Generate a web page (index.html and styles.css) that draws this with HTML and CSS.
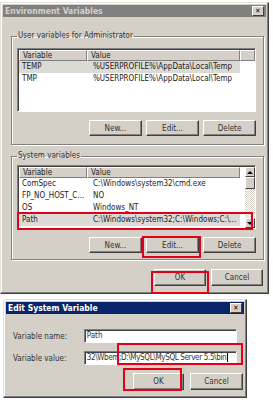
FILE: index.html
```html
<!DOCTYPE html>
<html lang="en">
<head>
  <meta charset="UTF-8" />
  <title>Environment Variables</title>
  <link rel="stylesheet" href="styles.css">
</head>
<body>

<div class="screen">

  <div class="win env">
    <div class="title inactive">
      <span class="title-text">Environment Variables</span>
      <span class="close">&#x2715;</span>
    </div>
    <div class="win-body">

      <fieldset class="group user-group">
        <legend>User variables for Administrator</legend>
        <div class="list">
          <div class="list-head">
            <div class="col col-var">Variable</div>
            <div class="col col-val">Value</div>
            <div class="col col-fill"></div>
          </div>
          <div class="row selected">
            <div class="col col-var">TEMP</div>
            <div class="col col-val">%USERPROFILE%\AppData\Local\Temp</div>
          </div>
          <div class="row">
            <div class="col col-var">TMP</div>
            <div class="col col-val">%USERPROFILE%\AppData\Local\Temp</div>
          </div>
        </div>
        <div class="btns">
          <button class="btn">New...</button>
          <button class="btn">Edit...</button>
          <button class="btn">Delete</button>
        </div>
      </fieldset>

      <fieldset class="group sys-group">
        <legend>System variables</legend>
        <div class="list with-scroll">
          <div class="list-main">
            <div class="list-head">
              <div class="col col-var">Variable</div>
              <div class="col col-val">Value</div>
            </div>
            <div class="row">
              <div class="col col-var">ComSpec</div>
              <div class="col col-val">C:\Windows\system32\cmd.exe</div>
            </div>
            <div class="row">
              <div class="col col-var">FP_NO_HOST_C...</div>
              <div class="col col-val">NO</div>
            </div>
            <div class="row">
              <div class="col col-var">OS</div>
              <div class="col col-val">Windows_NT</div>
            </div>
            <div class="row selected">
              <div class="col col-var">Path</div>
              <div class="col col-val">C:\Windows\system32;C:\Windows;C:\...</div>
            </div>
          </div>
          <div class="scrollbar">
            <div class="sb-btn"><span class="arrow up"></span></div>
            <div class="sb-thumb"></div>
            <div class="sb-track"></div>
            <div class="sb-btn"><span class="arrow down"></span></div>
          </div>
        </div>
        <div class="btns">
          <button class="btn">New...</button>
          <button class="btn">Edit...</button>
          <button class="btn">Delete</button>
        </div>
      </fieldset>

      <div class="btns dialog-btns">
        <button class="btn">OK</button>
        <button class="btn">Cancel</button>
      </div>
    </div>
  </div>

  <div class="win edit">
    <div class="title active">
      <span class="title-text">Edit System Variable</span>
      <span class="close">&#x2715;</span>
    </div>
    <div class="win-body edit-body">
      <div class="field">
        <label>Variable name:</label>
        <div class="input">Path</div>
      </div>
      <div class="field">
        <label>Variable value:</label>
        <div class="input tight">32\Wbem;D:\MySQL\MySQL Server 5.5\bin<span class="caret"></span></div>
      </div>
      <div class="btns edit-btns">
        <button class="btn">OK</button>
        <button class="btn">Cancel</button>
      </div>
    </div>
  </div>

  <!-- red highlight boxes drawn over the screenshot -->
  <div class="mark mark-path"></div>
  <div class="mark mark-edit"></div>
  <div class="mark mark-ok"></div>
  <div class="mark mark-value"></div>
  <div class="mark mark-ok2"></div>

</div>

</body>
</html>
```

FILE: styles.css
```css
body {
  margin: 0;
  background: #fff;
  font-family: "DejaVu Sans Condensed", "DejaVu Sans", sans-serif;
  font-size: 8px;
  color: #222;
}
.screen {
  position: relative;
  width: 273px;
  height: 400px;
  padding-top: 2px;
  box-sizing: border-box;
  overflow: hidden;
}

/* windows */
.win {
  background: #d4d0c8;
  border: 1px solid;
  border-color: #e4e2dc #404040 #404040 #e4e2dc;
  box-shadow: inset -1px -1px #808080, inset 1px 1px #fff;
  padding: 2px;
  box-sizing: border-box;
}
.env {
  width: 269px;
  height: 292px;
}
.edit {
  width: 244px;
  height: 99px;
  margin: 5px 0 0 3px;
}
.title {
  height: 12px;
  display: flex;
  align-items: center;
  justify-content: space-between;
  padding: 0 2px 0 2px;
  font-weight: bold;
  font-size: 8.5px;
}
.title.inactive {
  background: #808080;
  color: #d4d0c8;
}
.title.active {
  background: #0a246a;
  color: #fff;
}
.close {
  width: 10px;
  height: 8px;
  background: #d4d0c8;
  color: #000;
  font-size: 7px;
  line-height: 8px;
  text-align: center;
  border: 1px solid;
  border-color: #fff #404040 #404040 #fff;
}

/* group boxes */
.group {
  margin: 0;
  border: 1px solid #808080;
  box-shadow: 1px 1px 0 #fff, inset 1px 1px 0 #fff;
  width: 253px;
  box-sizing: border-box;
}
.group legend {
  padding: 0 1px;
  line-height: 10px;
  color: #333;
}
.user-group {
  margin: 14px 0 0 8px;
  padding: 7px 7px 8px 5px;
}
.sys-group {
  margin: 6px 0 0 8px;
  padding: 4px 7px 6px 5px;
}

/* list views */
.list {
  background: #fff;
  border: 1px solid;
  border-color: #808080 #fff #fff #808080;
  box-shadow: inset 1px 1px #404040;
  height: 64px;
  padding: 1px 0 0 1px;
  box-sizing: border-box;
}
.with-scroll {
  display: flex;
}
.list-main {
  flex: 1;
}
.list-head {
  display: flex;
  height: 11px;
  line-height: 10px;
}
.list-head .col {
  background: #d4d0c8;
  border: 1px solid;
  border-color: #fff #808080 #808080 #fff;
  box-sizing: border-box;
}
.col {
  padding-left: 3px;
  white-space: nowrap;
  overflow: hidden;
}
.col-var {
  width: 68px;
  box-sizing: border-box;
}
.col-val {
  width: 153px;
  box-sizing: border-box;
}
.col-fill {
  flex: 1;
}
.row {
  display: flex;
  height: 12px;
  line-height: 12px;
  width: 221px;
}
.row .col-val {
  padding-left: 6px;
}
.row.selected {
  background: #dcdad5;
}

/* scrollbar */
.scrollbar {
  width: 10px;
  display: flex;
  flex-direction: column;
}
.sb-btn,
.sb-thumb {
  height: 10px;
  background: #d4d0c8;
  border: 1px solid;
  border-color: #fff #404040 #404040 #fff;
  box-sizing: border-box;
  display: flex;
  align-items: center;
  justify-content: center;
}
.sb-thumb {
  height: 12px;
}
.sb-track {
  flex: 1;
  background: repeating-conic-gradient(#fff 0 25%, #d4d0c8 0 50%) 0 0 / 2px 2px;
}
.arrow {
  width: 0;
  height: 0;
  border-left: 3px solid transparent;
  border-right: 3px solid transparent;
}
.arrow.up {
  border-bottom: 3px solid #000;
}
.arrow.down {
  border-top: 3px solid #000;
}

/* buttons */
.btns {
  display: flex;
  justify-content: flex-end;
  gap: 4px;
  margin-top: 8px;
}
.btn {
  width: 53px;
  height: 16px;
  padding: 0;
  font-family: inherit;
  font-size: 8px;
  color: #333;
  background: #d4d0c8;
  border: 1px solid;
  border-color: #fff #404040 #404040 #fff;
  box-shadow: inset -1px -1px #808080;
}
.dialog-btns {
  gap: 5px;
  margin: 9px 3px 0 0;
}
.dialog-btns .btn {
  width: 52px;
  height: 17px;
}

/* edit dialog */
.edit-body {
  padding: 15px 7px 0 7px;
}
.field {
  display: flex;
  align-items: center;
  margin-bottom: 8px;
}
.field label {
  width: 71px;
  color: #333;
}
.input {
  width: 154px;
  height: 14px;
  line-height: 12px;
  padding-left: 2px;
  background: #fff;
  border: 1px solid;
  border-color: #808080 #fff #fff #808080;
  box-shadow: inset 1px 1px #404040;
  box-sizing: border-box;
  white-space: nowrap;
  overflow: hidden;
  color: #333;
}
.input.tight {
  letter-spacing: -0.35px;
}
.caret {
  display: inline-block;
  width: 1px;
  height: 9px;
  background: #000;
  vertical-align: middle;
  margin-left: 1px;
}
.edit-btns {
  gap: 6px;
  margin: 0 0 0 0;
  padding-right: 1px;
  width: 230px;
}
.edit-btns .btn {
  width: 51px;
  height: 17px;
}
.edit-btns .btn + .btn {
  width: 53px;
}

/* red annotation boxes */
.mark {
  position: absolute;
  border: 2px solid #e2001a;
  box-sizing: border-box;
}
.mark-path { left: 17px; top: 212px; width: 236px; height: 18px; }
.mark-edit { left: 142px; top: 236px; width: 59px; height: 22px; }
.mark-ok { left: 151px; top: 271px; width: 58px; height: 23px; }
.mark-value { left: 117px; top: 343px; width: 126px; height: 22px; }
.mark-ok2 { left: 123px; top: 368px; width: 59px; height: 23px; }
```
